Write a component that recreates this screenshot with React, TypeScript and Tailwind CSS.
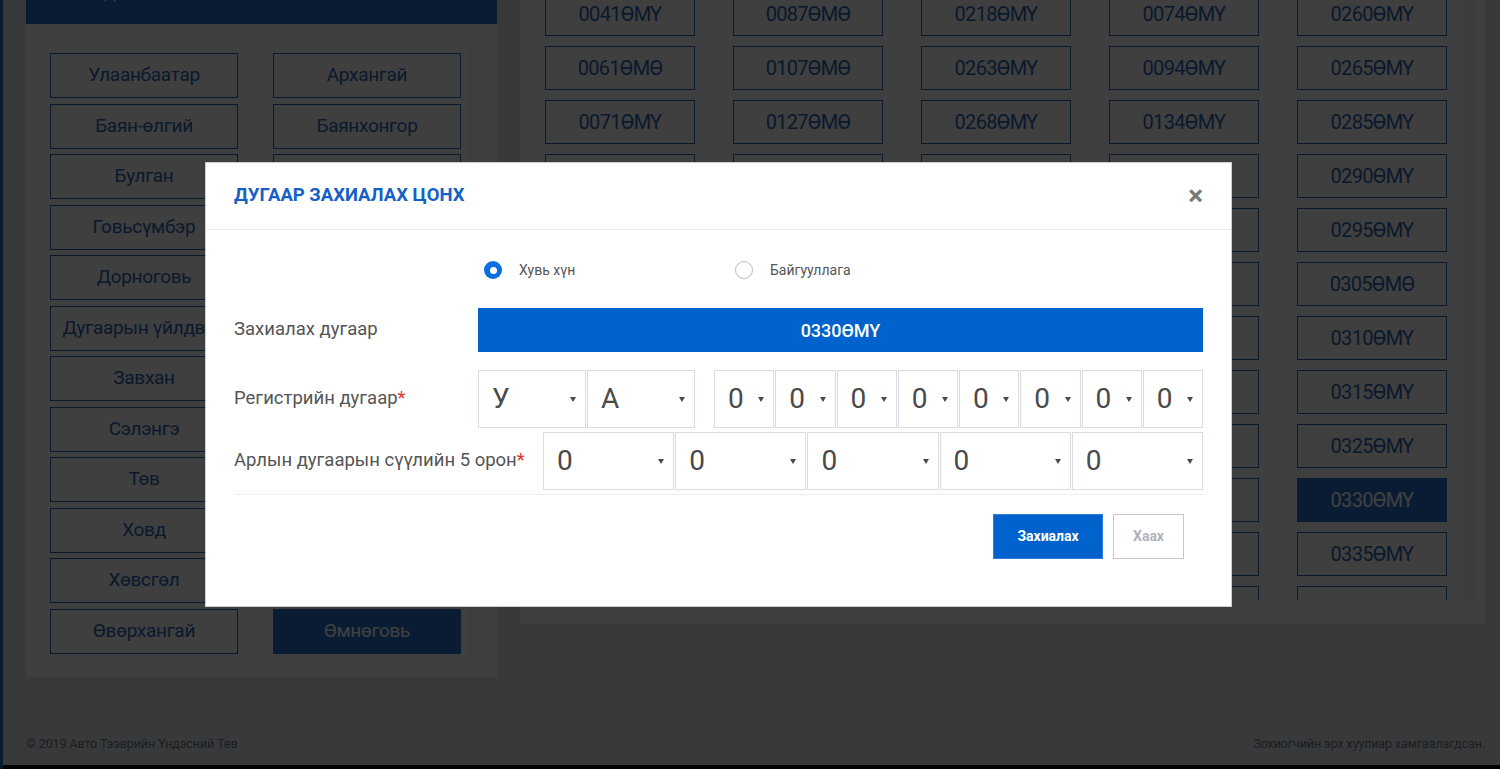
import React, { useState } from 'react';

const provinces: string[] = [
  'Улаанбаатар', 'Архангай',
  'Баян-өлгий', 'Баянхонгор',
  'Булган', 'Говь-Алтай',
  'Говьсүмбэр', 'Дархан-Уул',
  'Дорноговь', 'Дорнод',
  'Дугаарын үйлдвэр', 'Дундговь',
  'Завхан', 'Орхон',
  'Сэлэнгэ', 'Сүхбаатар',
  'Төв', 'Увс',
  'Ховд', 'Хэнтий',
  'Хөвсгөл', 'Эрдэнэт',
  'Өвөрхангай', 'Өмнөговь',
];

const plateColumns: string[][] = [
  ['0041ӨМҮ', '0061ӨМӨ', '0071ӨМҮ', '0081ӨМҮ', '0091ӨМӨ', '0101ӨМҮ', '0111ӨМҮ', '0121ӨМӨ', '0131ӨМҮ', '0141ӨМҮ', '0151ӨМҮ', '0161ӨМҮ'],
  ['0087ӨМӨ', '0107ӨМӨ', '0127ӨМӨ', '0137ӨМҮ', '0147ӨМӨ', '0157ӨМҮ', '0167ӨМҮ', '0177ӨМӨ', '0187ӨМҮ', '0197ӨМҮ', '0207ӨМҮ', '0217ӨМҮ'],
  ['0218ӨМҮ', '0263ӨМҮ', '0268ӨМҮ', '0273ӨМҮ', '0278ӨМӨ', '0283ӨМҮ', '0288ӨМҮ', '0293ӨМӨ', '0298ӨМҮ', '0303ӨМҮ', '0308ӨМҮ', '0313ӨМҮ'],
  ['0074ӨМҮ', '0094ӨМҮ', '0134ӨМҮ', '0154ӨМҮ', '0174ӨМӨ', '0194ӨМҮ', '0214ӨМҮ', '0234ӨМӨ', '0254ӨМҮ', '0274ӨМҮ', '0294ӨМҮ', '0314ӨМҮ'],
  ['0260ӨМҮ', '0265ӨМҮ', '0285ӨМҮ', '0290ӨМҮ', '0295ӨМҮ', '0305ӨМӨ', '0310ӨМҮ', '0315ӨМҮ', '0325ӨМҮ', '0330ӨМҮ', '0335ӨМҮ', '0340ӨМҮ'],
];

const Caret = () => (
  <span className="h-0 w-0 shrink-0 border-x-[3.5px] border-t-[5px] border-x-transparent border-t-[#4a4a4a]" />
);

const SelectBox: React.FC<{ value: string }> = ({ value }) => (
  <div className="flex h-[58px] min-w-0 flex-1 items-center justify-between border border-[#d9dde2] bg-white pl-[13px] pr-[9px] text-[28px] leading-none text-[#4a4a4a]">
    <span>{value}</span>
    <Caret />
  </div>
);

const Radio: React.FC<{ checked: boolean; label: string; onClick: () => void }> = ({ checked, label, onClick }) => (
  <button type="button" onClick={onClick} className="flex w-[251px] items-center">
    {checked ? (
      <span className="flex h-[18px] w-[18px] items-center justify-center rounded-full bg-[#0a6de0]">
        <span className="h-[7px] w-[7px] rounded-full bg-white" />
      </span>
    ) : (
      <span className="h-[18px] w-[18px] rounded-full border border-[#b5bcc4] bg-white" />
    )}
    <span className="ml-[17px] text-[14px] text-[#555]">{label}</span>
  </button>
);

export default function App() {
  const [ownerType, setOwnerType] = useState<'person' | 'org'>('person');
  const [open, setOpen] = useState(true);
  const selectedProvince = 'Өмнөговь';
  const selectedPlate = '0330ӨМҮ';

  return (
    <div className="relative h-[769px] overflow-hidden border-l-[3px] border-[#2870cc] bg-[#e0e4ea] font-['Roboto',sans-serif]">
      {/* page content */}
      <div className="-mt-[30px] flex items-start gap-[23px] pl-[23px] pr-[15px]">
        {/* province list */}
        <div className="w-[471px] bg-[#f9fafb]">
          <div className="h-[54px] bg-[#2870cc] pl-[18px] pt-[15px] text-[15px] leading-[18px] text-white/80">
            АЙМГУУД
          </div>
          <div className="flex pl-[24px] pt-[29px] pb-[23px]">
            <div className="grid w-[411px] grid-cols-2 gap-x-[35px] gap-y-[5.5px]">
              {provinces.map((name) => (
                <button
                  key={name}
                  className={`flex h-[45px] items-center justify-center overflow-hidden whitespace-nowrap border text-[19px] tracking-[-0.3px] ${
                    name === selectedProvince
                      ? 'border-[#2870cc] bg-[#2870cc] text-white'
                      : 'border-[#2a64b0] text-[#2d66b3]'
                  }`}
                >
                  {name}
                </button>
              ))}
            </div>
            <div className="ml-[6px] mt-[-6px] w-[12px] bg-[#f1f3f5]" />
          </div>
        </div>

        {/* plate numbers */}
        <div className="w-[965px] bg-[#f9fafb] pl-[4px] pt-[22px] pb-[24px]">
          <div className="flex h-[608px] overflow-hidden">
            {plateColumns.map((col, i) => (
              <div key={i} className="flex w-[188px] flex-col gap-[10px] border-r border-[#eceef1] pl-[21px] pr-[16px]">
                {col.map((plate) => (
                  <button
                    key={plate}
                    className={`flex h-[44px] shrink-0 items-center justify-center border text-[20px] tracking-[-0.7px] ${
                      plate === selectedPlate
                        ? 'border-[#2870cc] bg-[#2870cc] text-white'
                        : 'border-[#2a64b0] text-[#2d66b3]'
                    }`}
                  >
                    {plate}
                  </button>
                ))}
              </div>
            ))}
            <div className="w-[14px] bg-[#f3f4f6]" />
          </div>
        </div>
      </div>

      {/* footer */}
      <div className="mt-[46px] flex h-[42px] items-center justify-between border-t border-[#d3d7dd] pl-[23px] pr-[15px] text-[12.5px] tracking-[-0.1px] text-[#6f747d]">
        <span>© 2019 Авто Тээврийн Үндэсний Төв</span>
        <span>Зохиогчийн эрх хуулиар хамгаалагдсан.</span>
      </div>
      <div className="h-[5px] bg-[#0b0b0b]" />

      {open && (
        <>
          <div className="fixed inset-0 bg-black/75" />
          <div className="fixed left-[205px] top-[162px] w-[1027px] border border-black/20 bg-white">
            <div className="flex h-[67px] items-center justify-between border-b border-[#e9ecef] pl-[28px] pr-[28px]">
              <h5 className="text-[18.5px] font-bold text-[#1560c8]">ДУГААР ЗАХИАЛАХ ЦОНХ</h5>
              <button onClick={() => setOpen(false)} className="text-[28px] font-bold leading-none text-[#7a7a7a]">
                ×
              </button>
            </div>

            <div className="px-[28px] pt-[30px]">
              <div className="flex h-[20px] items-center">
                <div className="w-[250px]" />
                <Radio checked={ownerType === 'person'} label="Хувь хүн" onClick={() => setOwnerType('person')} />
                <Radio checked={ownerType === 'org'} label="Байгууллага" onClick={() => setOwnerType('org')} />
              </div>

              <div className="mt-[28px] flex items-center">
                <label className="w-[244px] text-[18.5px] text-[#555]">Захиалах дугаар</label>
                <div className="flex h-[44px] flex-1 items-center justify-center bg-[#0062cc] text-[18px] font-medium text-white">
                  {selectedPlate}
                </div>
              </div>

              <div className="mt-[18px] flex items-center">
                <label className="w-[244px] text-[18.5px] text-[#555]">
                  Регистрийн дугаар<span className="text-[#e3342f]">*</span>
                </label>
                <div className="flex w-[217px] gap-[1px]">
                  <SelectBox value="У" />
                  <SelectBox value="А" />
                </div>
                <div className="ml-[19px] flex flex-1 gap-[1px]">
                  {Array.from({ length: 8 }).map((_, i) => (
                    <SelectBox key={i} value="0" />
                  ))}
                </div>
              </div>

              <div className="mt-[4px] flex items-center">
                <label className="w-[309px] text-[18.5px] text-[#555]">
                  Арлын дугаарын сүүлийн 5 орон<span className="text-[#e3342f]">*</span>
                </label>
                <div className="flex flex-1 gap-[1px]">
                  {Array.from({ length: 5 }).map((_, i) => (
                    <SelectBox key={i} value="0" />
                  ))}
                </div>
              </div>

              <div className="mt-[4px] border-b border-[#eceef1]" />

              <div className="mt-[19px] flex justify-end gap-[10px] pb-[47px] pr-[19px]">
                <button className="h-[45px] w-[110px] border border-[#2f7ee0] bg-[#0062cc] text-[14px] font-bold text-white">
                  Захиалах
                </button>
                <button
                  onClick={() => setOpen(false)}
                  className="h-[45px] w-[71px] border border-[#c4c8cd] bg-white text-[14px] font-bold text-[#b0b3b8]"
                >
                  Хаах
                </button>
              </div>
            </div>
          </div>
        </>
      )}
    </div>
  );
}
